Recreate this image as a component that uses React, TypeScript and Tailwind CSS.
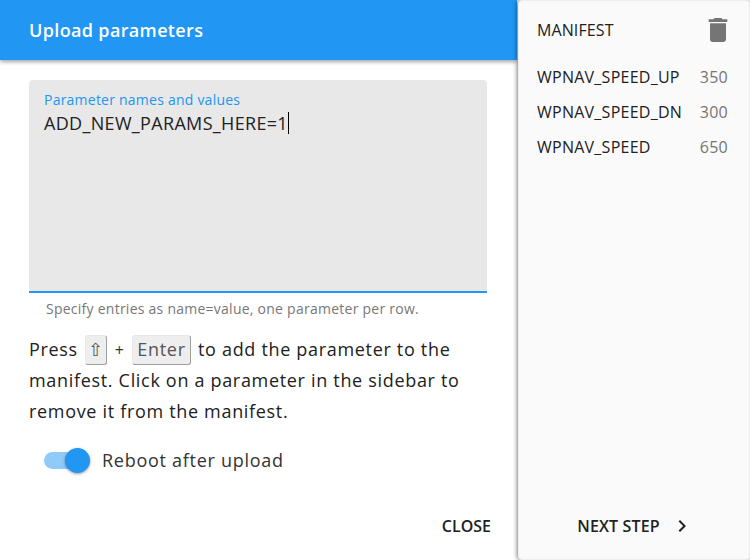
import type { ReactNode } from "react";

function Trash() {
  return (
    <svg width="32" height="32" viewBox="0 0 24 24" fill="#757575" className="-mr-[6px] block">
      <path d="M6 19c0 1.1.9 2 2 2h8c1.1 0 2-.9 2-2V7H6v12zM19 4h-3.5l-1-1h-5l-1 1H5v2h14V4z" />
    </svg>
  );
}

function Chevron() {
  return (
    <svg width="24" height="24" viewBox="0 0 24 24" fill="#212121" className="block">
      <path d="M10 6L8.59 7.41 13.17 12l-4.58 4.59L10 18l6-6z" />
    </svg>
  );
}

function Key({ children, className }: { children: ReactNode; className: string }) {
  return (
    <span className={`inline-flex h-[30px] items-center justify-center rounded-[3px] border border-[#e8e8e8] border-r-[#9e9e9e] border-b-[#9e9e9e] bg-[#eeeeee] text-[#555555] ${className}`}>
      {children}
    </span>
  );
}

const rows = [
  ["WPNAV_SPEED_UP", "350"],
  ["WPNAV_SPEED_DN", "300"],
  ["WPNAV_SPEED", "650"],
];

export default function App() {
  return (
    <div className="flex h-[560px] w-[750px] overflow-hidden bg-white text-[#212121]" style={{ fontFamily: '"Open Sans", "Noto Sans", sans-serif' }}>
      <div className="flex w-[517px] flex-col">
        <header className="flex h-[60px] items-center bg-[#2196f3] pl-[29px] text-[18px] font-semibold tracking-[0.35px] text-white shadow-[0_2px_4px_rgba(0,0,0,0.35)]">
          Upload parameters
        </header>
        <main className="flex flex-1 flex-col pl-[29px] pr-[30px] pt-[20px]">
          <div className="h-[213px] rounded-t-[4px] border-b-2 border-[#2196f3] bg-[#e8e8e8] px-[15px] pt-[12px]">
            <div className="text-[14px] leading-[16px] tracking-[0.23px] text-[#2196f3]">Parameter names and values</div>
            <div className="mt-[2px] flex h-[26px] items-center text-[18px] tracking-[0.33px] text-[#222222]">
              ADD_NEW_PARAMS_HERE=1<span className="h-[22px] w-px bg-black" />
            </div>
          </div>
          <div className="mt-[7px] pl-[17px] text-[14px] leading-[18px] tracking-[0.25px] text-[#777777]">
            Specify entries as name=value, one parameter per row.
          </div>
          <div className="mt-[16px] text-[18px] leading-[31px] tracking-[0.68px] text-[#212121]">
            <div className="flex items-center">
              <span>Press</span>
              <Key className="ml-[7px] w-[22px] text-[18px] tracking-normal">⇧</Key>
              <span className="ml-[8px] text-[16px] leading-none tracking-normal text-[#333333]">+</span>
              <Key className="ml-[8px] w-[59px] text-[18px]">Enter</Key>
              <span className="ml-[7px]">to add the parameter to the</span>
            </div>
            <div>manifest. Click on a parameter in the sidebar to</div>
            <div>remove it from the manifest.</div>
          </div>
          <div className="mt-[20px] flex h-[26px] items-center pl-[15px]">
            <span className="relative block h-[26px] w-[46px]">
              <span className="absolute left-0 top-[5px] h-[17px] w-[40px] rounded-full bg-[#90caf9]" />
              <span className="absolute right-0 top-[1px] h-[25px] w-[25px] rounded-full bg-[#2196f3] shadow-[0_1px_3px_rgba(0,0,0,0.4)]" />
            </span>
            <span className="ml-[12px] text-[18px] tracking-[0.72px] text-[#333333]">Reboot after upload</span>
          </div>
          <div className="mt-auto flex h-[68px] items-center justify-end">
            <span className="-mr-[4px] text-[16px] font-semibold text-[#212121]">CLOSE</span>
          </div>
        </main>
      </div>
      <aside className="ml-px flex w-[232px] flex-col rounded-[4px] bg-[#fafafa] pl-[19px] pr-[22px] shadow-[-1px_0_4px_rgba(0,0,0,0.5),inset_0_0_2px_rgba(0,0,0,0.18)]">
        <div className="flex h-[60px] items-center justify-between">
          <span className="text-[16px] tracking-[0.1px] text-[#212121]">MANIFEST</span>
          <Trash />
        </div>
        <div className="-mt-px flex flex-col">
          {rows.map(([name, value]) => (
            <div key={name} className="flex h-[35px] items-center justify-between text-[16px] tracking-[0.25px]">
              <span className="text-[#212121]">{name}</span>
              <span className="text-[#757575]">{value}</span>
            </div>
          ))}
        </div>
        <div className="mt-auto flex h-[68px] items-center justify-center pl-[6px]">
          <span className="text-[16px] font-semibold tracking-[0.15px] text-[#212121]">NEXT STEP</span>
          <span className="ml-[10px]"><Chevron /></span>
        </div>
      </aside>
    </div>
  );
}
